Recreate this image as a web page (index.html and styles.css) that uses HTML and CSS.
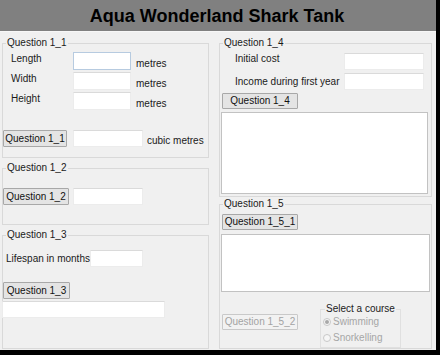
FILE: index.html
```html
<!DOCTYPE html>
<html lang="en">
<head>
    <meta charset="UTF-8">
    <title>Aqua Wonderland Shark Tank</title>
    <link rel="stylesheet" href="styles.css">
</head>
<body>
<div class="app">
    <header class="title-bar">
        <h1>Aqua Wonderland Shark Tank</h1>
    </header>

    <div class="main">
        <!-- Columna izquierda -->
        <div class="column">
            <fieldset class="group q11">
                <legend>Question 1_1</legend>
                <div class="dims">
                    <div class="dim-row">
                        <span class="dim-label">Length</span>
                        <input class="box dim-input focused" type="text">
                        <span class="unit">metres</span>
                    </div>
                    <div class="dim-row">
                        <span class="dim-label">Width</span>
                        <input class="box dim-input" type="text">
                        <span class="unit">metres</span>
                    </div>
                    <div class="dim-row">
                        <span class="dim-label">Height</span>
                        <input class="box dim-input" type="text">
                        <span class="unit">metres</span>
                    </div>
                </div>
                <div class="action-row">
                    <button class="btn btn-q11">Question 1_1</button>
                    <input class="box result-input" type="text">
                    <span class="unit">cubic metres</span>
                </div>
            </fieldset>

            <fieldset class="group q12">
                <legend>Question 1_2</legend>
                <div class="action-row">
                    <button class="btn btn-q12">Question 1_2</button>
                    <input class="box result-input" type="text">
                </div>
            </fieldset>

            <fieldset class="group q13">
                <legend>Question 1_3</legend>
                <div class="life-row">
                    <span class="life-label">Lifespan in months</span>
                    <input class="box life-input" type="text">
                </div>
                <button class="btn btn-q13">Question 1_3</button>
                <input class="box wide-input" type="text">
            </fieldset>
        </div>

        <!-- Columna derecha -->
        <div class="column">
            <fieldset class="group q14">
                <legend>Question 1_4</legend>
                <div class="cost-row">
                    <span class="cost-label first">Initial cost</span>
                    <input class="box cost-input" type="text">
                </div>
                <div class="cost-row">
                    <span class="cost-label">Income during first year</span>
                    <input class="box cost-input" type="text">
                </div>
                <button class="btn btn-right">Question 1_4</button>
                <textarea class="memo memo-q14"></textarea>
            </fieldset>

            <fieldset class="group q15">
                <legend>Question 1_5</legend>
                <button class="btn btn-right">Question 1_5_1</button>
                <textarea class="memo memo-q15"></textarea>
                <div class="course-row">
                    <button class="btn btn-right btn-disabled" disabled>Question 1_5_2</button>
                    <fieldset class="group course">
                        <legend>Select a course</legend>
                        <div class="radio"><span class="dot checked"></span>Swimming</div>
                        <div class="radio"><span class="dot"></span>Snorkelling</div>
                    </fieldset>
                </div>
            </fieldset>
        </div>
    </div>
</div>
</body>
</html>
```

FILE: styles.css
```css
body {
    margin: 0;
    padding: 0;
    background: #000;
    font-family: "Liberation Sans", Arial, sans-serif;
    font-size: 10px;
    line-height: 12px;
    color: #1a1a1a;
}

.app {
    width: 436px;
    height: 350px;
    background: #f0f0f0;
    display: flex;
    flex-direction: column;
}

/* Barra de titulo */
.title-bar {
    height: 31px;
    background: #808080;
    border-bottom: 1px solid #f7f7f7;
    display: flex;
    align-items: center;
    justify-content: center;
}

.title-bar h1 {
    margin: 0 0 0 -2px;
    font-size: 18px;
    font-weight: bold;
    color: #000;
    line-height: 20px;
}

.main {
    flex: 1;
    display: grid;
    grid-template-columns: 207px 213px;
    column-gap: 10px;
    padding: 5px 4px 1px 2px;
}

.column {
    display: flex;
    flex-direction: column;
}

/* Cajas de grupo */
.group {
    margin: 0;
    padding: 0;
    min-width: 0;
    border: 1px solid #d9d9d9;
    box-sizing: border-box;
}

.group legend {
    padding: 0 1px;
    margin-left: 3px;
    line-height: 12px;
}

.box {
    box-sizing: border-box;
    height: 17px;
    margin: 0;
    padding: 0;
    background: #fff;
    border: 1px solid #ececec;
    border-top-color: #dadada;
    font: inherit;
}

.box.focused {
    border-color: #b7cbe0;
}

.btn {
    box-sizing: border-box;
    height: 17px;
    margin: 0;
    padding: 0;
    background: #e4e4e4;
    border: 1px solid #a8a8a8;
    border-radius: 1px;
    font: inherit;
    color: #111;
    text-align: center;
}

.unit {
    align-self: flex-end;
}

/* Question 1_1 */
.q11 {
    padding: 3px 0 10px 0;
}

.dims {
    display: flex;
    flex-direction: column;
    gap: 2px;
}

.dim-row {
    display: flex;
    height: 18px;
}

.dim-label {
    align-self: center;
    width: 62px;
    padding-left: 8px;
    margin-bottom: 4px;
}

.dim-input {
    width: 58px;
    height: 18px;
    margin-right: 5px;
}

.action-row {
    display: flex;
    height: 17px;
}

.q11 .action-row {
    margin-top: 20px;
}

.btn-q11 {
    width: 64px;
    margin-right: 6px;
}

.result-input {
    width: 70px;
    margin-right: 4px;
}

/* Question 1_2 */
.q12 {
    margin-top: 4px;
    padding: 14px 0 19px 0;
}

.btn-q12 {
    width: 66px;
    margin-right: 4px;
}

/* Question 1_3 */
.q13 {
    margin-top: 4px;
    flex: 1;
    padding: 9px 0 0 0;
}

.life-row {
    display: flex;
    align-items: center;
    height: 17px;
}

.life-label {
    width: 84px;
    padding-left: 3px;
}

.life-input {
    width: 53px;
}

.btn-q13 {
    display: block;
    width: 67px;
    margin-top: 15px;
}

.wide-input {
    display: block;
    width: 163px;
    margin: 2px 0 0 -1px;
}

/* Question 1_4 */
.q14 {
    padding: 4px 0 2px 0;
}

.cost-row {
    display: flex;
    align-items: center;
    height: 17px;
    margin-bottom: 3px;
}

.cost-label {
    padding-left: 15px;
}

.cost-label.first {
    margin-bottom: 6px;
}

.cost-input {
    width: 80px;
    margin-left: auto;
    margin-right: 7px;
}

.btn-right {
    display: block;
    width: 76px;
    height: 16px;
    margin-left: 2px;
}

.memo {
    display: block;
    box-sizing: border-box;
    margin: 0 0 0 1px;
    padding: 0;
    background: #fff;
    border: 1px solid #c2c2c2;
    resize: none;
    font: inherit;
}

.memo-q14 {
    width: 207px;
    height: 82px;
    margin-top: 3px;
}

/* Question 1_5 */
.q15 {
    margin-top: 1px;
    flex: 1;
    padding: 4px 0 0 0;
}

.memo-q15 {
    width: 209px;
    height: 58px;
    margin-top: 4px;
}

.course-row {
    display: flex;
    align-items: flex-start;
    margin-top: 11px;
}

.btn-disabled {
    margin-top: 11px;
    background: #f2f2f2;
    border-color: #c9c9c9;
    color: #a3a3a3;
}

.course {
    width: 81px;
    margin-left: 22px;
    padding: 1px 0 3px 2px;
    border-color: #e0e0e0;
}

.course legend {
    margin-left: 2px;
    color: #222;
}

.radio {
    display: flex;
    align-items: center;
    height: 12px;
    color: #a6a6a6;
}

.radio + .radio {
    margin-top: 4px;
}

.dot {
    box-sizing: border-box;
    width: 8px;
    height: 8px;
    margin-right: 2px;
    border: 1px solid #c8c8c8;
    border-radius: 50%;
    background: #f6f6f6;
    display: flex;
    align-items: center;
    justify-content: center;
}

.dot.checked::after {
    content: "";
    width: 4px;
    height: 4px;
    border-radius: 50%;
    background: #a8a8a8;
}
```
